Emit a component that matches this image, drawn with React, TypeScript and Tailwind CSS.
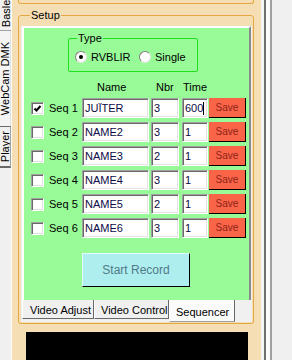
import React from "react";

const rows = [
  { n: 1, name: "JUÏTER", nbr: "3", time: "600", checked: true },
  { n: 2, name: "NAME2", nbr: "3", time: "1", checked: false },
  { n: 3, name: "NAME3", nbr: "2", time: "1", checked: false },
  { n: 4, name: "NAME4", nbr: "3", time: "1", checked: false },
  { n: 5, name: "NAME5", nbr: "2", time: "1", checked: false },
  { n: 6, name: "NAME6", nbr: "3", time: "1", checked: false },
];

const sunken =
  "h-[20px] bg-white border border-t-[#a0a0a0] border-l-[#a0a0a0] border-b-white border-r-white shadow-[inset_1px_1px_0_#696969,inset_-1px_-1px_0_#e3e3e3] pl-[2px] leading-[18px] text-[#0b0b45] overflow-hidden whitespace-nowrap";

function CheckBox({ checked }: { checked: boolean }) {
  return (
    <div className="ml-[7px] w-[13px] h-[13px] bg-white border border-t-[#a0a0a0] border-l-[#a0a0a0] border-b-white border-r-white shadow-[inset_1px_1px_0_#696969,inset_-1px_-1px_0_#e3e3e3] flex items-center justify-center">
      {checked && (
        <svg width="9" height="9" viewBox="0 0 9 9">
          <path d="M1.5 4.5 L3.5 6.5 L7.5 2" fill="none" stroke="#000" strokeWidth="2" />
        </svg>
      )}
    </div>
  );
}

function Radio({ checked }: { checked?: boolean }) {
  return (
    <div className="w-[12px] h-[12px] rounded-full bg-white border border-t-[#808080] border-l-[#808080] border-b-[#e3e3e3] border-r-[#e3e3e3] flex items-center justify-center">
      {checked && <div className="w-[4px] h-[4px] rounded-full bg-black" />}
    </div>
  );
}

function VTab({ label, className }: { label: string; className: string }) {
  return (
    <div className={`w-[11px] flex flex-col items-center overflow-hidden ${className}`}>
      <span className="[writing-mode:vertical-rl] rotate-180 leading-[12px] whitespace-nowrap">{label}</span>
    </div>
  );
}

export default function App() {
  return (
    <div className="w-[292px] h-[360px] bg-[#f0f0f0] flex overflow-hidden text-[11px] text-black [font-family:'Liberation_Sans',Arial,sans-serif]">
      {/* left vertical tabs */}
      <div className="w-[12px] shrink-0 flex flex-col border-r border-r-[#fcfcfc]">
        <VTab label="Basler" className="h-[31px] justify-end pb-[3px] border-b border-b-[#a0a0a0]" />
        <VTab label="WebCam DMK" className="h-[95px] justify-center bg-[#f4f4f4] border-r border-r-[#e0e0e0]" />
        <VTab label="Player" className="h-[42px] justify-center border-t border-t-[#696969] border-b-2 border-b-[#696969] border-r border-r-[#a0a0a0]" />
      </div>

      {/* wheat panel */}
      <div className="w-[249px] shrink-0 bg-[#f6deb4] flex flex-col pl-[6px]">
        <div className="w-[236px] h-[4px] border-x border-b border-[#e3a844] rounded-b-[3px]" />

        <fieldset className="mt-[5px] w-[236px] border border-[#e3a844] rounded-[3px] pt-[5px] pb-[1px] pl-[2px]">
          <legend className="ml-[9px] px-[1px] leading-[12px]">Setup</legend>

          {/* tab control */}
          <div className="w-[231px] h-[296px] bg-[#f0f0f0] flex flex-col">
            <div className="ml-[1px] w-[229px] h-[274px] border-t-2 border-l-2 border-r-2 border-t-white border-l-white border-r-[#8a8a8a] bg-[#98fb98] flex flex-col">
              <fieldset className="ml-[44px] mt-[4px] w-[130px] border border-[#1ee11e] rounded-[2px] pb-[1px]">
                <legend className="ml-[8px] px-[1px] leading-[12px]">Type</legend>
                <div className="h-[26px] flex items-center">
                  <div className="ml-[6px]">
                    <Radio checked />
                  </div>
                  <span className="ml-[4px] w-[48px]">RVBLIR</span>
                  <Radio />
                  <span className="ml-[4px]">Single</span>
                </div>
              </fieldset>

              <div className="mt-[9px] h-[13px] flex leading-[13px]">
                <div className="w-[58px]" />
                <div className="w-[67px] pl-[15px]">Name</div>
                <div className="ml-[2px] w-[28px] pl-[5px]">Nbr</div>
                <div className="ml-[3px] w-[26px] pl-[1px]">Time</div>
              </div>

              <div className="mt-[4px] flex flex-col gap-[4px]">
                {rows.map((r) => (
                  <div key={r.n} className="h-[20px] flex items-center">
                    <CheckBox checked={r.checked} />
                    <div className="ml-[5px] w-[33px]">Seq {r.n}</div>
                    <div className={`${sunken} w-[67px]`}>{r.name}</div>
                    <div className={`${sunken} ml-[2px] w-[28px]`}>{r.nbr}</div>
                    <div className={`${sunken} ml-[3px] w-[26px] flex items-center`}>
                      {r.time}
                      {r.n === 1 && <span className="w-[1px] h-[13px] bg-black" />}
                    </div>
                    <button className="ml-[1px] w-[37px] h-[20px] bg-[#fa6448] border-b border-r border-b-black border-r-black text-[10px] text-[#8e2418] leading-[19px]">
                      Save
                    </button>
                  </div>
                ))}
              </div>

              <button className="mt-[15px] ml-[58px] w-[108px] h-[34px] bg-[#afeeee] border border-t-[#e4fbfb] border-l-[#e4fbfb] border-b-black border-r-black text-[#4f7a87] text-[12px]">
                Start Record
              </button>
            </div>

            {/* bottom tabs */}
            <div className="h-[22px] flex items-start">
              <div className="ml-[1px] w-[72px] h-[19px] border-l border-l-white border-r border-r-[#696969] border-b border-b-[#696969] pl-[7px] pt-[4px] leading-[13px]">
                Video Adjust
              </div>
              <div className="w-[75px] h-[19px] border-l border-l-white border-r border-r-[#696969] border-b border-b-[#696969] pl-[6px] pt-[4px] leading-[13px]">
                Video Control
              </div>
              <div className="w-[66px] h-[22px] bg-[#fbfbfb] border-l border-l-white border-r border-r-[#696969] border-b border-b-[#a0a0a0] pl-[6px] pt-[6px] leading-[13px]">
                Sequencer
              </div>
            </div>
          </div>
        </fieldset>

        <div className="mt-[8px] ml-[8px] w-[222px] flex-1 bg-black" />
      </div>

      {/* splitter */}
      <div className="flex shrink-0">
        <div className="w-[3px] bg-[#f4f4f4]" />
        <div className="w-[2px] bg-[#6f6f6f]" />
        <div className="w-[4px] bg-[#fbfbfb]" />
        <div className="w-[2px] bg-[#a0a0a0]" />
      </div>
    </div>
  );
}
